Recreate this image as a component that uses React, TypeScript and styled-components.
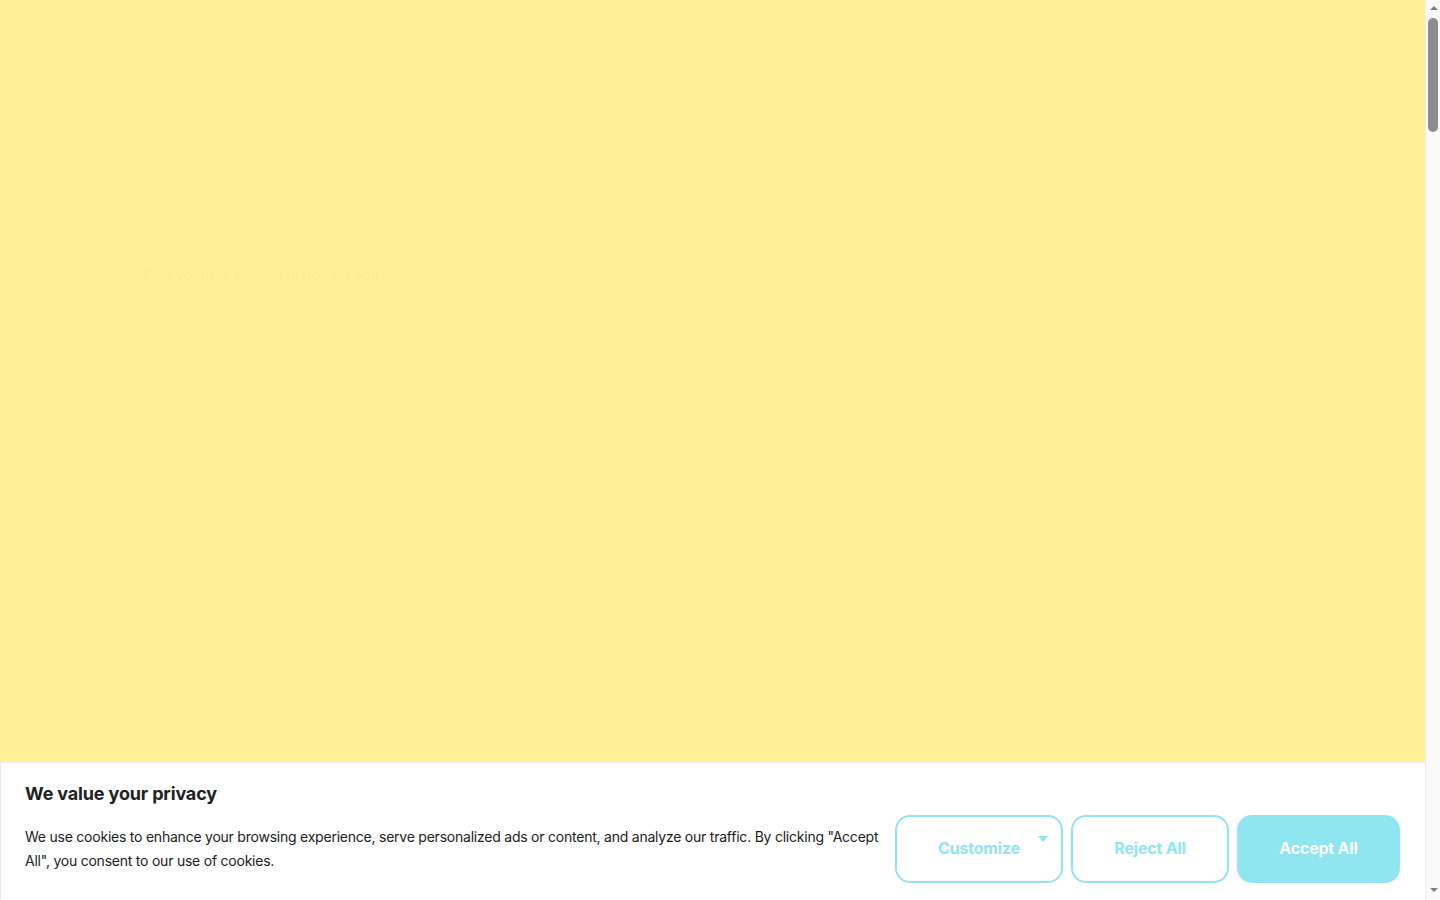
import React from "react";
import styled, { createGlobalStyle } from "styled-components";

const GlobalStyle = createGlobalStyle`
  html, body {
    margin: 0;
    padding: 0;
    height: 100%;
    overflow: hidden;
  }
  body {
    background: #fff197;
    font-family: "Inter", "Roboto", sans-serif;
    color: #212121;
  }
  #root {
    height: 100%;
  }
`;

const App: React.FC = () => {
  return (
    <>
      <GlobalStyle />
      <Window>
        <Viewport>
          <Hero>
            <Tagline>Find your the perfect match for you</Tagline>
          </Hero>
          <ConsentBar>
            <ConsentText>
              <ConsentTitle>We value your privacy</ConsentTitle>
              <ConsentBody>
                We use cookies to enhance your browsing experience, serve personalized ads or content, and analyze
                our traffic. By clicking "Accept All", you consent to our use of cookies.
              </ConsentBody>
            </ConsentText>
            <Actions>
              <OutlineButton $width={168}>
                Customize
                <Caret />
              </OutlineButton>
              <OutlineButton $width={158}>Reject All</OutlineButton>
              <FilledButton>Accept All</FilledButton>
            </Actions>
          </ConsentBar>
        </Viewport>
        <ScrollRail>
          <RailArrow $dir="up" />
          <RailTrack>
            <RailThumb />
          </RailTrack>
          <RailArrow $dir="down" />
        </ScrollRail>
      </Window>
    </>
  );
};

export default App;

const Window = styled.div`
  height: 100%;
  display: flex;
`;

const Viewport = styled.div`
  flex: 1;
  min-width: 0;
  display: flex;
  flex-direction: column;
`;

const Hero = styled.section`
  flex: 1;
  background: #fff197;
  padding: 265px 0 0 143px;
`;

const Tagline = styled.p`
  margin: 0;
  font-size: 14px;
  line-height: 20px;
  font-weight: 500;
  color: rgba(200, 170, 0, 0.06);
`;

const ConsentBar = styled.div`
  box-sizing: border-box;
  height: 138px;
  display: flex;
  gap: 12px;
  padding: 20px 25px 17px 24px;
  background: #ffffff;
  border-top: 1px solid #ececec;
  border-left: 1px solid #ececec;
`;

const ConsentText = styled.div`
  flex: 1;
  min-width: 0;
`;

const ConsentTitle = styled.h2`
  margin: 0 0 20px 0;
  font-size: 18px;
  line-height: 22px;
  font-weight: 700;
  letter-spacing: -0.15px;
  color: #212121;
`;

const ConsentBody = styled.p`
  margin: 0;
  font-size: 14px;
  line-height: 24px;
  color: #212121;
  letter-spacing: -0.23px;
`;

const Actions = styled.div`
  align-self: flex-end;
  display: flex;
  gap: 8px;
`;

const ButtonBase = styled.button`
  position: relative;
  box-sizing: border-box;
  height: 68px;
  border-radius: 15px;
  font-family: "Inter", "Roboto", sans-serif;
  font-size: 16px;
  font-weight: 700;
  letter-spacing: -0.2px;
  padding: 0 0 2px 0;
  cursor: pointer;
`;

const OutlineButton = styled(ButtonBase)<{ $width: number }>`
  width: ${(p) => p.$width}px;
  background: #ffffff;
  border: 2px solid #8fe5f0;
  color: #8fe5f0;
`;

const FilledButton = styled(ButtonBase)`
  width: 163px;
  background: #8fe5f0;
  border: 2px solid #8fe5f0;
  color: #ffffff;
`;

const Caret = styled.span`
  position: absolute;
  top: 19px;
  right: 13px;
  width: 0;
  height: 0;
  border-left: 5px solid transparent;
  border-right: 5px solid transparent;
  border-top: 6px solid #8fe5f0;
`;

/* window scrollbar on the right edge */
const ScrollRail = styled.div`
  width: 15px;
  display: flex;
  flex-direction: column;
  background: #fafafa;
  border-left: 1px solid #ededed;
  box-sizing: border-box;
`;

const RailArrow = styled.div<{ $dir: "up" | "down" }>`
  height: 15px;
  display: flex;
  align-items: center;
  justify-content: center;
  ${(p) => (p.$dir === "down" ? "margin-bottom: 3px;" : "")}

  &::before {
    content: "";
    width: 0;
    height: 0;
    border-left: 4px solid transparent;
    border-right: 4px solid transparent;
    ${(p) => (p.$dir === "up" ? "border-bottom: 4px solid #7f7f7f;" : "border-top: 4px solid #7f7f7f;")}
    margin-left: 1px;
  }
`;

const RailTrack = styled.div`
  flex: 1;
  padding: 3px 2px 0 2px;
`;

const RailThumb = styled.div`
  height: 114px;
  border-radius: 5px;
  background: #8d8d8d;
`;
